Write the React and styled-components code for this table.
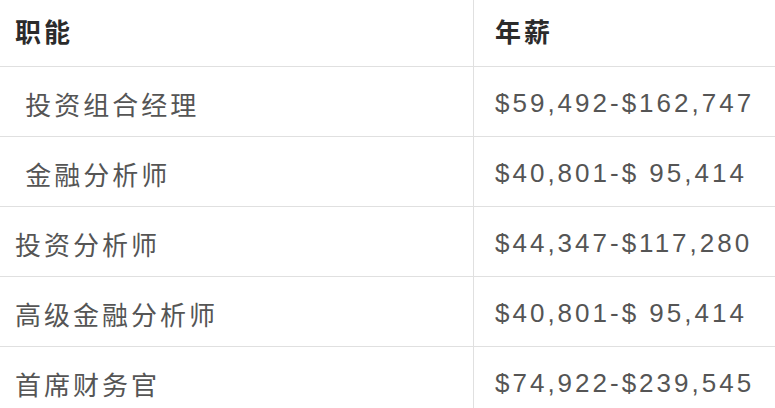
import styled, { createGlobalStyle } from "styled-components";

const GlobalStyle = createGlobalStyle`
  html, body {
    margin: 0;
    padding: 0;
    background: #fff;
  }
`;

const rows = [
  { role: "\u00a0投资组合经理", pay: "$59,492-$162,747" },
  { role: "\u00a0金融分析师", pay: "$40,801-$ 95,414" },
  { role: "投资分析师", pay: "$44,347-$117,280" },
  { role: "高级金融分析师", pay: "$40,801-$ 95,414" },
  { role: "首席财务官", pay: "$74,922-$239,545" },
];

const App = () => {
  return (
    <>
      <GlobalStyle />
      <Table>
        <Row $head>
          <Cell $head>职能</Cell>
          <Cell $head $right>年薪</Cell>
        </Row>
        {rows.map((r, i) => (
          <Row key={i}>
            <Cell>{r.role}</Cell>
            <Cell $right>{r.pay}</Cell>
          </Row>
        ))}
      </Table>
    </>
  );
};

export default App;

const Table = styled.div`
  width: 775px;
  display: flex;
  flex-direction: column;
  font-family: "Liberation Sans", "Noto Sans CJK SC", sans-serif;
  font-size: 26px;
  letter-spacing: 3px;
`;

const Row = styled.div`
  display: grid;
  grid-template-columns: 473px 1fr;
  height: ${(p) => (p.$head ? "66px" : "69px")};
  border-bottom: 1px solid #e0e0e0;
`;

const Cell = styled.div`
  display: flex;
  align-items: center;
  padding-left: ${(p) => (p.$right ? "21px" : "15px")};
  padding-top: ${(p) => (p.$head ? "0" : "3px")};
  padding-bottom: ${(p) => (p.$head ? "6px" : "0")};
  border-left: ${(p) => (p.$right ? "1px solid #e0e0e0" : "none")};
  white-space: pre;
  color: ${(p) => (p.$head ? "#2b2b2b" : "#555")};
  font-weight: ${(p) => (p.$head ? 700 : 400)};
`;
